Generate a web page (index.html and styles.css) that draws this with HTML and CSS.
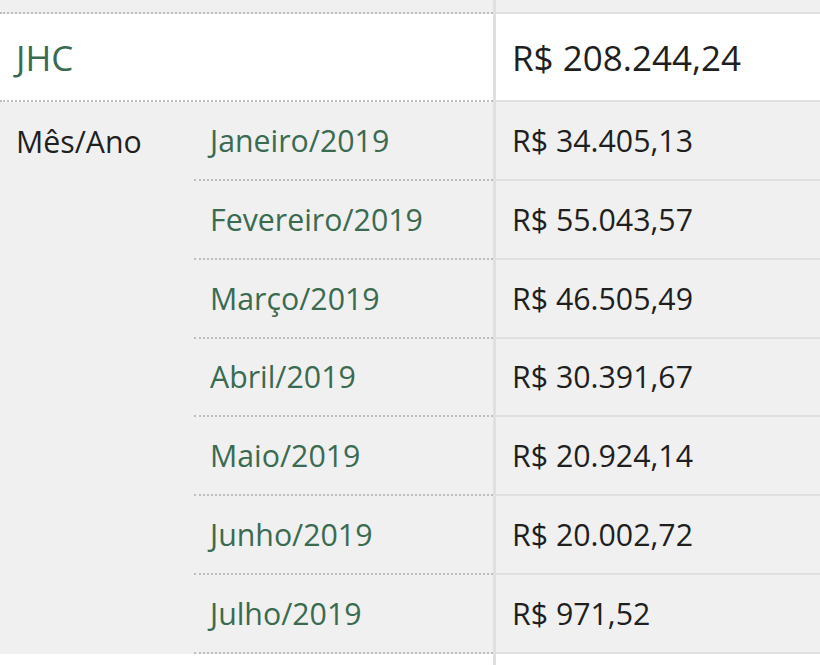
FILE: index.html
```html
<!DOCTYPE html>
<html lang="pt-BR">
<head>
<meta charset="utf-8">
<title>JHC - Gastos</title>
<link rel="stylesheet" href="styles.css">
</head>
<body>
<div class="sheet">
  <div class="cell name prev"></div>
  <div class="cell val prev"></div>

  <div class="cell name total link">JHC</div>
  <div class="cell val total">R$ 208.244,24</div>

  <div class="cell label">Mês/Ano</div>
  <div class="cell month link">Janeiro/2019</div>
  <div class="cell val">R$ 34.405,13</div>

  <div class="cell label"></div>
  <div class="cell month link">Fevereiro/2019</div>
  <div class="cell val">R$ 55.043,57</div>

  <div class="cell label"></div>
  <div class="cell month link">Março/2019</div>
  <div class="cell val">R$ 46.505,49</div>

  <div class="cell label"></div>
  <div class="cell month link">Abril/2019</div>
  <div class="cell val">R$ 30.391,67</div>

  <div class="cell label"></div>
  <div class="cell month link">Maio/2019</div>
  <div class="cell val">R$ 20.924,14</div>

  <div class="cell label"></div>
  <div class="cell month link">Junho/2019</div>
  <div class="cell val">R$ 20.002,72</div>

  <div class="cell label"></div>
  <div class="cell month link">Julho/2019</div>
  <div class="cell val">R$ 971,52</div>

  <div class="cell after"></div>
  <div class="cell val after"></div>
</div>
</body>
</html>
```

FILE: styles.css
```css
html, body {
  margin: 0;
  padding: 0;
  background: #ffffff;
}

body {
  font-family: "Open Sans", "Noto Sans", sans-serif;
  color: #1f1f1f;
  overflow: hidden;
}

.sheet {
  display: grid;
  grid-template-columns: 194px 299px 1fr;
  grid-template-rows: 14px 88px repeat(7, 78.86px) 40px;
  width: 820px;
}

.cell {
  box-sizing: border-box;
  display: flex;
  align-items: center;
  font-size: 30.3px;
  line-height: 1;
  white-space: nowrap;
  padding-top: 1px;
}

.link {
  color: #3a6b50;
}

.name {
  grid-column: 1 / span 2;
  padding-left: 16px;
  border-bottom: 2px dotted #bdbdbd;
}

.prev {
  background: #f0f0f0;
}

.total {
  background: #ffffff;
  font-size: 35px;
}

.label {
  grid-column: 1;
  background: #f0f0f0;
  padding-left: 16px;
}

.month {
  grid-column: 2;
  background: #f0f0f0;
  padding-left: 16px;
  border-bottom: 2px dotted #bdbdbd;
}

.val {
  grid-column: 3;
  background: #f0f0f0;
  border-left: 3px solid #e0e0e0;
  border-bottom: 2px solid #e0e0e0;
  padding-left: 16px;
}

.val.total {
  background: #ffffff;
}

.after {
  grid-column: 1 / span 2;
  background: #ffffff;
}

.val.after {
  grid-column: 3;
  background: #ffffff;
  border-bottom: none;
}
```
